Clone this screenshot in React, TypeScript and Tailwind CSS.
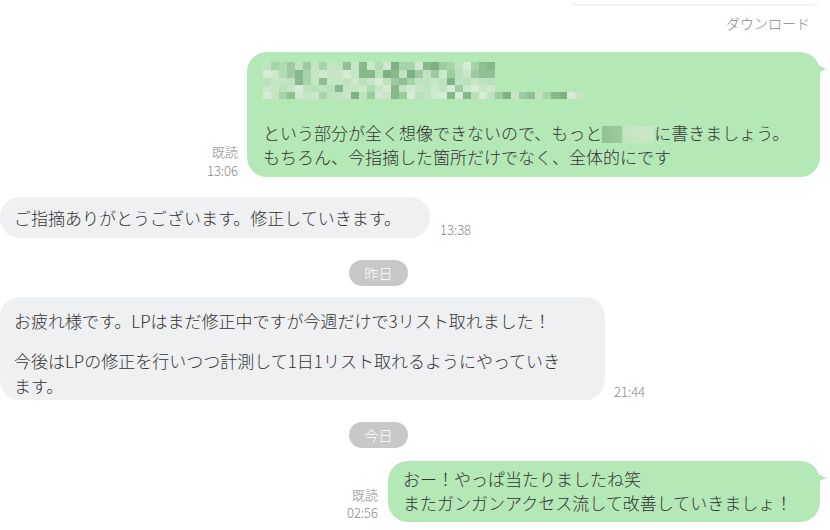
import React from "react";

function Mosaic() {
  let seed = 7;
  const rnd = () => {
    seed = (seed * 9301 + 49297) % 233280;
    return seed / 233280;
  };
  const dark = ["#8fbf92", "#9ccb9e", "#a6d3a8", "#86b889", "#b0dcb1", "#c2e3c2", "#d0e8cf", "#9fc9a0", "#7fb083"];
  const light = ["#c4e6c4", "#cde9cc", "#bfe3c0", "#d6ecd5", "#b8e0b9", "#c9e5c8"];
  const rects: React.ReactNode[] = [];
  const cw = 8;
  for (let r = 0; r < 2; r++) {
    for (let c = 0; c < 29; c++) {
      const pool = rnd() < 0.55 ? dark : light;
      const col = pool[Math.floor(rnd() * pool.length)];
      rects.push(<rect key={`a${r}-${c}`} x={c * cw} y={r * 8} width={cw} height={8} fill={col} />);
    }
  }
  for (let r = 2; r < 4; r++) {
    for (let c = 0; c < 29; c++) {
      const pool = rnd() < 0.25 ? dark : light;
      const col = pool[Math.floor(rnd() * pool.length)];
      rects.push(<rect key={`b${r}-${c}`} x={c * cw} y={16 + (r - 2) * 7} width={cw} height={7} fill={col} />);
    }
  }
  for (let c = 0; c < 40; c++) {
    const pool = rnd() < 0.45 ? dark : light;
    const col = pool[Math.floor(rnd() * pool.length)];
    rects.push(<rect key={`c${c}`} x={c * cw} y={30} width={cw} height={7} fill={col} />);
  }
  return (
    <svg width="320" height="38" viewBox="0 0 320 38" className="block blur-[0.7px]">
      {rects}
    </svg>
  );
}

function Tail() {
  return (
    <span className="absolute right-[-6px] top-[13px] w-0 h-0 border-y-[4px] border-y-transparent border-l-[8px] border-l-[#b5e8b7]" />
  );
}

export default function App() {
  return (
    <div
      className="w-[830px] h-[530px] bg-white overflow-hidden text-[#333333] font-light"
      style={{ fontFamily: '"Noto Sans CJK JP", "Noto Sans", sans-serif' }}
    >
      <div className="ml-[572px] w-[245px] h-[4px] bg-white rounded-b-[12px] shadow-[0_1px_3px_rgba(0,0,0,0.10)]" />

      <div className="mt-[11px] pl-[726px] text-[14px] leading-[16px] text-[#888888]">ダウンロード</div>

      {/* green bubble 1 */}
      <div className="mt-[21px] flex justify-end items-end gap-[9px] pr-[10px]">
        <div className="text-[13px] leading-[19px] text-[#888888] text-right mb-[-3px]">
          <div>既読</div>
          <div>13:06</div>
        </div>
        <div className="relative w-[573px] h-[125px] bg-[#b5e8b7] rounded-[20px] pl-[16px] pt-[10px] text-[17px] leading-[24px]">
          <Mosaic />
          <div className="mt-[21px] whitespace-nowrap">
            という部分が全く想像できないので、もっと
            <span className="inline-block align-[-3px] w-[52px] h-[17px] bg-[linear-gradient(90deg,#8fc293_0%,#9ccb9e_38%,#c3e4c3_40%,#cbe7ca_100%)] blur-[0.5px]" />
            に書きましょう。
          </div>
          <div className="whitespace-nowrap">もちろん、今指摘した箇所だけでなく、全体的にです</div>
          <Tail />
        </div>
      </div>

      {/* gray bubble 1 */}
      <div className="mt-[20px] flex items-end gap-[10px]">
        <div className="w-[430px] h-[41px] bg-[#eff0f2] rounded-[20px] pl-[14px] flex items-center text-[17px] leading-[24px] whitespace-nowrap">
          ご指摘ありがとうございます。修正していきます。
        </div>
        <div className="text-[13px] leading-[16px] text-[#888888]">13:38</div>
      </div>

      <div className="mt-[22px] ml-[349px] w-[59px] h-[26px] rounded-full bg-[#c8c8c8] text-white text-[14px] flex items-center justify-center">
        昨日
      </div>

      {/* gray bubble 2 */}
      <div className="mt-[11px] flex items-end gap-[9px]">
        <div className="w-[605px] h-[103px] bg-[#eff0f2] rounded-[20px] pl-[14px] pt-[11px] text-[17px] leading-[25px] whitespace-nowrap">
          <div>お疲れ様です。LPはまだ修正中ですが今週だけで3リスト取れました！</div>
          <div className="mt-[15px]">今後はLPの修正を行いつつ計測して1日1リスト取れるようにやっていき</div>
          <div>ます。</div>
        </div>
        <div className="text-[13px] leading-[16px] text-[#888888]">21:44</div>
      </div>

      <div className="mt-[22px] ml-[349px] w-[59px] h-[26px] rounded-full bg-[#c8c8c8] text-white text-[14px] flex items-center justify-center">
        今日
      </div>

      {/* green bubble 2 */}
      <div className="mt-[13px] flex justify-end items-end gap-[10px] pr-[10px]">
        <div className="text-[13px] leading-[18px] text-[#888888] text-right">
          <div>既読</div>
          <div>02:56</div>
        </div>
        <div className="relative w-[432px] h-[61px] bg-[#b5e8b7] rounded-[20px] pl-[15px] pt-[6px] text-[17px] leading-[24px] whitespace-nowrap">
          <div>おー！やっぱ当たりましたね笑</div>
          <div>またガンガンアクセス流して改善していきましょ！</div>
          <Tail />
        </div>
      </div>
    </div>
  );
}
